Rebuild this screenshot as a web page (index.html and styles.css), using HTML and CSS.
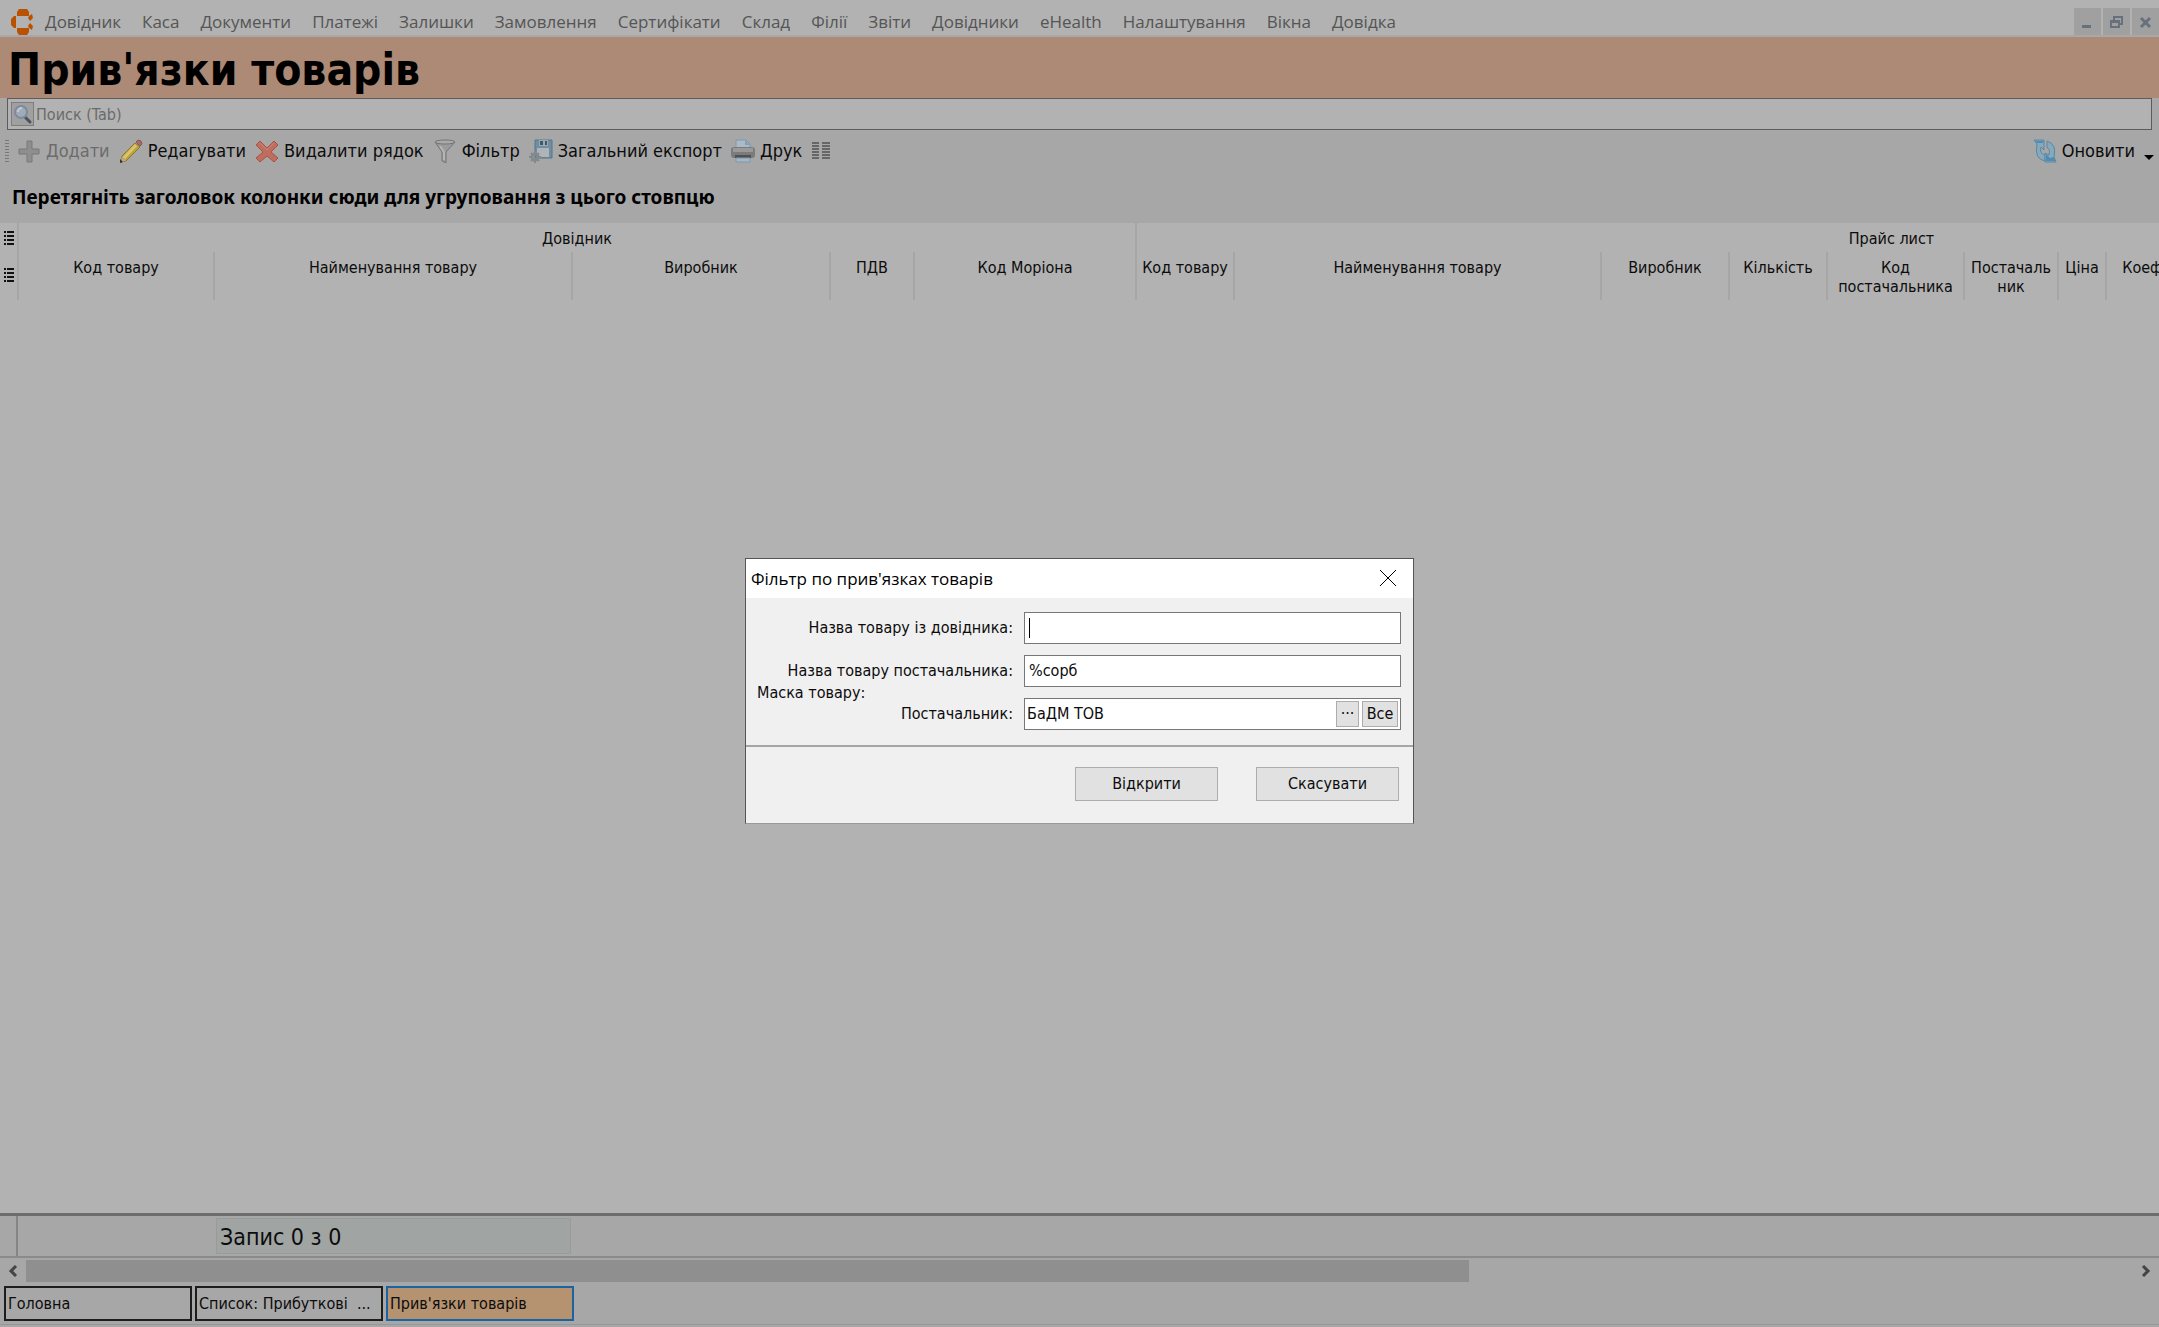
FILE: index.html
```html
<!DOCTYPE html>
<html lang="uk">
<head>
  <meta charset="UTF-8" />
  <meta name="viewport" content="width=device-width, initial-scale=1.0"/>
  <title>Прив'язки товарів</title>
  <link rel="stylesheet" href="styles.css">
</head>
<body>

  <header class="menubar">
    <svg class="logo" width="22" height="26" viewBox="0 0 22 26">
      <path fill="#b85200" d="M8 0h8l2 3v4H6V3zM5 7v12H3l-3-3V10l3-3zM6 19h12v4l-2 3H8l-2-3zM18 7l3-2 1 4-3 3-2-3zM18 19l3 2 1-4-3-3-2 3z"/>
    </svg>
    <nav class="menu">
      <a href="#">Довідник</a>
      <a href="#">Каса</a>
      <a href="#">Документи</a>
      <a href="#">Платежі</a>
      <a href="#">Залишки</a>
      <a href="#">Замовлення</a>
      <a href="#">Сертифікати</a>
      <a href="#">Склад</a>
      <a href="#">Філії</a>
      <a href="#">Звіти</a>
      <a href="#">Довідники</a>
      <a href="#">eHealth</a>
      <a href="#">Налаштування</a>
      <a href="#">Вікна</a>
      <a href="#">Довідка</a>
    </nav>
    <div class="window-buttons">
      <button type="button" aria-label="Згорнути">
        <svg width="27" height="27" viewBox="0 0 27 27"><path fill="#66717b" d="M8 17h9v3H8z"/></svg>
      </button>
      <button type="button" aria-label="Відновити">
        <svg width="27" height="27" viewBox="0 0 27 27"><path fill="none" stroke="#66717b" stroke-width="2" d="M11 12V9h8v7h-2M8 13h8v6H8zM8 14h8"/></svg>
      </button>
      <button type="button" aria-label="Закрити">
        <svg width="27" height="27" viewBox="0 0 27 27"><path fill="none" stroke="#66717b" stroke-width="3" d="M9 10l9 9M18 10l-9 9"/></svg>
      </button>
    </div>
  </header>

  <h1>Прив'язки товарів</h1>

  <div class="search">
    <button type="button" aria-label="Пошук">
      <svg width="21" height="22" viewBox="0 0 21 22">
        <path stroke="#4c5058" stroke-width="3" stroke-linecap="round" d="M13 14l5 5"/>
        <circle cx="9" cy="9" r="6" fill="#9fabb8" stroke="#7d8a9e" stroke-width="2"/>
        <path fill="none" stroke="#c3cad2" stroke-width="2" d="M6 9a4 4 0 0 1 4-4"/>
      </svg>
    </button>
    <input type="text" placeholder="Поиск (Tab)" aria-label="Поиск" />
  </div>

  <div class="toolbar">
    <span class="grip"></span>
    <button type="button" disabled>
      <svg width="24" height="24" viewBox="0 0 24 24"><path fill="#8e8e8e" stroke="#797979" d="M10 2h5v8h7v5h-7v8h-5v-8H2v-5h8z"/></svg>
      Додати
    </button>
    <button type="button">
      <svg width="24" height="24" viewBox="0 0 24 24">
        <path fill="#c0a23c" stroke="#8a7730" d="M16 4l5 4L7 22l-5 1 1-6z"/>
        <path stroke="#d9c56c" stroke-width="3" d="M17 6L5 19"/>
        <path fill="#b06868" stroke="#85595a" d="M17 3l2-2q4 0 4 4l-2 2z"/>
        <path fill="#bda68a" d="M3 17l4 5-5 1z"/>
        <path fill="#333" d="M1 20l3 3-3 1z"/>
      </svg>
      Редагувати
    </button>
    <button type="button">
      <svg width="24" height="24" viewBox="0 0 24 24"><path fill="#be6d5e" stroke="#aa5345" stroke-linejoin="round" d="M5 2l7 7 7-7 4 4-7 7 7 6-4 4-7-6-7 6-4-4 7-6-7-7z"/><path fill="none" stroke="#cb8477" d="M5 4l7 7 7-7"/></svg>
      Видалити рядок
    </button>
    <button type="button">
      <svg width="24" height="24" viewBox="0 0 24 24">
        <path fill="#9b9b9b" stroke="#747474" d="M2 3l7 10v9l4 2v-11l9-10z"/>
        <ellipse cx="12" cy="3" rx="10" ry="2" fill="#aaa" stroke="#747474"/>
        <path fill="none" stroke="#b5b5b5" stroke-width="2" d="M7 7l4 6v8"/>
      </svg>
      Фільтр
    </button>
    <button type="button">
      <svg width="24" height="24" viewBox="0 0 24 24">
        <path fill="#6f8ea2" stroke="#54768c" d="M6 1h17v18H6z"/>
        <path fill="#b0b4b6" d="M8 9h12v9H8z"/>
        <path fill="#9ba9b3" d="M10 1h9v6h-9z"/>
        <path fill="#405669" d="M11 2h3v4h-3zM16 2h2v4h-2z"/>
        <circle cx="6" cy="18" r="3" fill="none" stroke="#838a8f" stroke-width="3"/>
        <path stroke="#838a8f" stroke-width="2" d="M6 12v3M6 21v3M0 18h3M9 18h3M2 14l2 2M10 14l-2 2M2 22l2-2M10 22l-2-2"/>
      </svg>
      Загальний експорт
    </button>
    <button type="button">
      <svg width="24" height="24" viewBox="0 0 24 24">
        <path fill="#aeb9c3" stroke="#7899b6" d="M5 11V1h10l4 4v6z"/>
        <path fill="#7ea0bf" d="M14 1l5 5h-5z"/>
        <rect x="0" y="8" width="24" height="11" rx="3" fill="#7b7b7b"/>
        <path fill="#999" d="M2 9h20v4H2z"/>
        <path fill="#505050" d="M4 16h16v3H4z"/>
        <path fill="#a9b5c0" stroke="#7899b6" d="M5 19h14v4H5z"/>
      </svg>
      Друк
    </button>
    <button type="button" aria-label="Колонки">
      <svg width="20" height="18" viewBox="0 0 20 18"><path stroke="#666" stroke-width="2" d="M1 1h7M1 4h7M1 7h7M1 10h7M1 13h7M1 16h7M11 1h8M11 4h8M11 7h8M11 10h8M11 13h8M11 16h8"/></svg>
    </button>
    <button type="button" class="refresh">
      <svg width="24" height="24" viewBox="0 0 24 24">
        <path fill="#86a9be" stroke="#5a869f" d="M1 1h10v10L8 8q-2 6 4 8v6Q1 20 4 5z"/>
        <path fill="#86a9be" stroke="#5a869f" d="M14 2q10 3 7 16l2 5H12v-9l4 2q2-5-2-8z"/>
        <path fill="#4f8bb3" d="M13 15l4 4 4-1 1 4h-9zM2 2h8v2H4z"/>
      </svg>
      Оновити
    </button>
    <button type="button" class="more" aria-label="Ще">
      <svg width="10" height="5" viewBox="0 0 10 5"><path d="M0 0h10L5 5z"/></svg>
    </button>
  </div>

  <div class="group-panel">Перетягніть заголовок колонки сюди для угруповання з цього стовпцю</div>

  <main class="grid">
    <table>
      <colgroup>
        <col class="w-mark"><col class="w-code"><col class="w-name"><col class="w-maker"><col class="w-vat"><col class="w-morion">
        <col class="w-small"><col class="w-name"><col class="w-medium"><col class="w-small"><col class="w-supplier-code"><col class="w-supplier"><col class="w-price"><col class="w-coef"><col class="w-rest">
      </colgroup>
      <thead>
        <tr class="bands">
          <th><svg width="10" height="16" viewBox="0 0 10 16"><path stroke="#111" stroke-width="2" d="M3 1h7M3 5h7M3 9h7M3 13h7M0 1h2M0 5h2M0 9h2M0 13h2"/></svg></th>
          <th colspan="5">Довідник</th>
          <th colspan="9">Прайс лист</th>
        </tr>
        <tr class="columns">
          <th><svg width="10" height="16" viewBox="0 0 10 16"><path stroke="#111" stroke-width="2" d="M3 1h7M3 5h7M3 9h7M3 13h7M0 1h2M0 5h2M0 9h2M0 13h2"/></svg></th>
          <th>Код товару</th>
          <th>Найменування товару</th>
          <th>Виробник</th>
          <th>ПДВ</th>
          <th>Код Моріона</th>
          <th>Код товару</th>
          <th>Найменування товару</th>
          <th>Виробник</th>
          <th>Кількість</th>
          <th>Код<br>постачальника</th>
          <th>Постачаль<br>ник</th>
          <th>Ціна</th>
          <th>Коефіцієнт</th>
          <th></th>
        </tr>
      </thead>
    </table>
  </main>

  <div class="summary">
    <span class="mark"></span>
    <span class="records">Запис 0 з 0</span>
  </div>

  <div class="scrollbar">
    <button type="button" aria-label="Ліворуч">
      <svg width="10" height="12" viewBox="0 0 10 12"><path fill="none" stroke="#444" stroke-width="3" d="M8 1L3 6l5 5"/></svg>
    </button>
    <div class="track"><div class="thumb"></div></div>
    <button type="button" aria-label="Праворуч">
      <svg width="10" height="12" viewBox="0 0 10 12"><path fill="none" stroke="#444" stroke-width="3" d="M2 1l5 5-5 5"/></svg>
    </button>
  </div>

  <div class="tabs">
    <button type="button">Головна</button>
    <button type="button">Список: Прибуткові&nbsp; ...</button>
    <button type="button" class="active">Прив'язки товарів</button>
  </div>
  <footer class="status"></footer>

  <div class="overlay">
    <form class="dialog" role="dialog" aria-labelledby="dialog-title">
      <div class="dialog-head">
        <h2 id="dialog-title">Фільтр по прив'язках товарів</h2>
        <button type="button" aria-label="Закрити">
          <svg width="16" height="16" viewBox="0 0 16 16"><path stroke="#000" d="M0 0l16 16M16 0L0 16"/></svg>
        </button>
      </div>
      <div class="fields">
        <label class="name" for="name">Назва товару із довідника:</label>
        <input type="text" id="name" class="current" />
        <label class="supplier-name" for="supplier-name">Назва товару постачальника:</label>
        <input type="text" id="supplier-name" value="%сорб" />
        <span class="mask">Маска товару:</span>
        <label class="supplier" for="supplier">Постачальник:</label>
        <div class="picker">
          <input type="text" id="supplier" value="БаДМ ТОВ" />
          <button type="button" class="dots">···</button>
          <button type="button" class="all">Все</button>
        </div>
      </div>
      <div class="actions">
        <button type="submit">Відкрити</button>
        <button type="button">Скасувати</button>
      </div>
    </form>
  </div>

</body>
</html>
```

FILE: styles.css
```css
* {
  box-sizing: border-box;
}

body {
  margin: 0;
  height: 100vh;
  display: flex;
  flex-direction: column;
  overflow: hidden;
  background: #a7a7a7;
  color: #0c0c0c;
  font-family: "DejaVu Sans Condensed", "DejaVu Sans", sans-serif;
  font-stretch: condensed;
  font-size: 16px;
}

button,
input {
  font: inherit;
  color: inherit;
  border: none;
  background: none;
  padding: 0;
  outline: none;
}

svg {
  display: block;
  flex: none;
}

/* menu */

.menubar {
  display: flex;
  align-items: center;
  padding: 8px 0 0 11px;
  background: #b2b2b2;
  border-bottom: 2px solid #a8a8a8;
  font-family: "Open Sans", sans-serif;
  font-stretch: normal;
  font-size: 17px;
}

.menu {
  display: flex;
  flex: 1;
  gap: 21px;
  padding-left: 12px;
}

.menu a {
  color: #555;
  text-decoration: none;
  line-height: 24px;
}

.window-buttons {
  display: flex;
  gap: 2px;
}

.window-buttons button {
  background: #a0a0a0;
}

h1 {
  margin: 0;
  padding: 4px 8px 0;
  background: #ad8a76;
  color: #000;
  font-size: 44px;
  line-height: 57px;
}

/* search */

.search {
  display: flex;
  align-items: center;
  height: 32px;
  margin: 0 7px;
  padding: 0 3px;
  border: 1px solid #5c5c5c;
  background: #b2b2b2;
}

.search button {
  background: #a0a0a0;
  border: 1px solid #7d7d7d;
}

.search input {
  flex: 1;
  padding-left: 2px;
}

.search input::placeholder {
  color: #6a6a6a;
  opacity: 1;
}

/* toolbar */

.toolbar {
  display: flex;
  align-items: center;
  height: 41px;
  padding: 0 5px;
  font-size: 18px;
}

.toolbar button {
  display: flex;
  align-items: center;
  gap: 5px;
  margin-right: 9px;
}

.toolbar button:disabled {
  color: #6c6c6c;
}

.toolbar .grip {
  width: 4px;
  height: 22px;
  margin-right: 8px;
  background: repeating-linear-gradient(#777 0 1px, #a7a7a7 1px 3px);
}

.toolbar .refresh {
  margin-left: auto;
}

.toolbar .more {
  margin: 14px 0 0;
}

.group-panel {
  height: 52px;
  padding-left: 12px;
  color: #000;
  font-family: "Noto Sans", sans-serif;
  font-stretch: normal;
  font-size: 19px;
  font-weight: bold;
  line-height: 52px;
}

/* grid */

.grid {
  flex: 1;
  overflow: hidden;
  background: #b2b2b2;
}

table {
  width: 2648px;
  table-layout: fixed;
  border-collapse: collapse;
}

th {
  padding: 6px 0 0;
  border-right: 2px solid #a6a6a6;
  font-weight: normal;
  line-height: 19px;
  vertical-align: top;
  white-space: nowrap;
}

th svg {
  margin: 2px 0 0 4px;
}

.bands th {
  height: 29px;
}

.columns th {
  height: 48px;
}

.columns th svg {
  margin-top: 10px;
}

.w-mark { width: 18px; }
.w-code { width: 196px; }
.w-name { width: 358px; }
.w-maker { width: 258px; }
.w-vat { width: 84px; }
.w-morion { width: 222px; }
.w-small { width: 98px; }
.w-small ~ .w-name { width: 367px; }
.w-medium { width: 128px; }
.w-supplier-code { width: 137px; }
.w-supplier { width: 94px; }
.w-price { width: 48px; }
.w-coef { width: 116px; }

/* bottom */

.summary {
  display: flex;
  height: 45px;
  border-top: 3px solid #6d6d6d;
  border-bottom: 2px solid #8a8a8a;
}

.summary .mark {
  width: 18px;
  margin-right: 198px;
  border-right: 2px solid #858585;
}

.summary .records {
  width: 355px;
  margin: 2px 0;
  padding-left: 3px;
  border: 1px solid #979b99;
  background: #a0a4a2;
  font-size: 23px;
  line-height: 36px;
}

.scrollbar {
  display: flex;
  height: 24px;
  padding: 2px 0 0;
}

.scrollbar button {
  width: 26px;
  display: grid;
  place-items: center;
}

.track {
  flex: 1;
}

.thumb {
  width: 68.5%;
  height: 100%;
  background: #8f8f8f;
}

.tabs {
  display: flex;
  gap: 3px;
  padding: 4px 4px 3px;
}

.tabs button {
  width: 188px;
  height: 35px;
  padding-left: 2px;
  border: 2px solid #1c1e1c;
  text-align: left;
  white-space: nowrap;
}

.tabs .active {
  background: #b59270;
  border-color: #1c64a0;
}

.status {
  height: 3px;
  border-top: 1px solid #979797;
}

/* filter dialog */

.overlay {
  position: absolute;
  inset: 0;
  display: grid;
  place-items: center;
  padding-top: 54px;
}

.dialog {
  width: 669px;
  background: #f0f0f0;
  border: 1px solid #555;
  border-bottom-color: #999;
}

.dialog-head {
  display: flex;
  align-items: center;
  justify-content: space-between;
  height: 39px;
  padding: 0 17px 0 5px;
  background: #fff;
}

.dialog-head h2 {
  margin: 0;
  font-family: "Open Sans", sans-serif;
  font-size: 17px;
  font-stretch: normal;
  font-weight: normal;
  color: #000;
}

.fields {
  display: grid;
  grid-template-columns: 1fr 377px;
  grid-template-rows: repeat(3, 32px);
  gap: 11px;
  align-items: center;
  padding: 14px 12px 15px 11px;
  border-bottom: 2px solid #a5a5a5;
}

.fields label {
  grid-column: 1;
  text-align: right;
}

.name { grid-row: 1; }
.supplier-name { grid-row: 2; }
.supplier { grid-row: 3; }

.fields .mask {
  grid-column: 1;
  grid-row: 2 / 4;
}

.fields > input,
.picker {
  grid-column: 2;
  height: 32px;
  padding-left: 4px;
  background: #fff;
  border: 1px solid #777;
}

.fields > .current {
  background: linear-gradient(#000, #000) 4px center / 1px 20px no-repeat #fff;
}

.picker {
  display: flex;
  align-items: center;
  gap: 3px;
  padding: 0 2px;
}

.picker input {
  flex: 1;
  min-width: 0;
}

.picker button {
  height: 26px;
  background: #e1e1e1;
  border: 1px solid #adadad;
}

.picker .dots {
  width: 23px;
}

.picker .all {
  width: 36px;
}

.actions {
  display: flex;
  justify-content: flex-end;
  gap: 38px;
  padding: 20px 14px 22px;
}

.actions button {
  width: 143px;
  height: 34px;
  background: #e1e1e1;
  border: 1px solid #adadad;
}
```
